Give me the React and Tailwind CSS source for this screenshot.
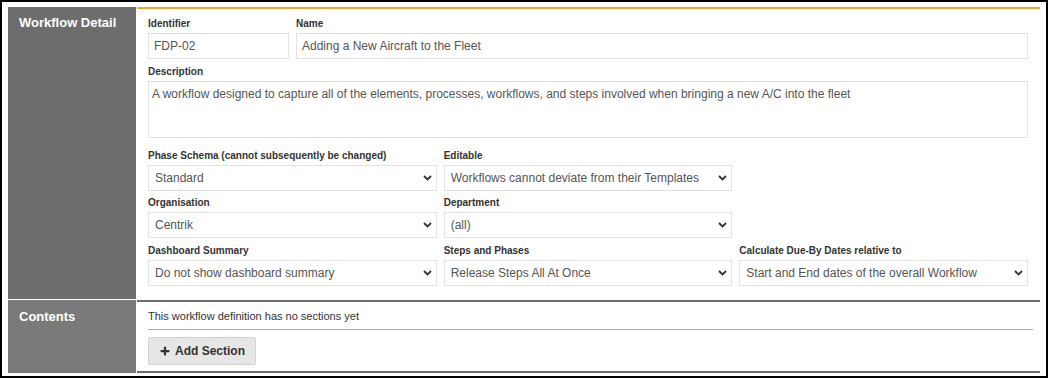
import { Plus } from 'lucide-react';

const font = { fontFamily: '"Liberation Sans", Arial, sans-serif' };

function Label({ children }) {
  return (
    <div className="h-[14px] leading-[14px] mb-[2px] text-[10px] font-bold text-[#333] whitespace-nowrap">
      {children}
    </div>
  );
}

function TextField({ value }) {
  return (
    <input
      readOnly
      value={value}
      className="w-full h-[26px] border border-[#e3e3e3] bg-white px-[5px] text-[12px] text-[#555] outline-none"
    />
  );
}

function SelectField({ value }) {
  return (
    <div className="relative h-[26px]">
      <select
        value={value}
        onChange={() => {}}
        className="w-full h-[26px] appearance-none border border-[#e3e3e3] bg-white pl-[6px] pr-6 text-[12px] text-[#555] outline-none"
      >
        <option>{value}</option>
      </select>
      <svg
        className="absolute right-[5px] top-[10px] pointer-events-none"
        width="9"
        height="6"
        viewBox="0 0 9 6"
        fill="none"
      >
        <path d="M1 1l3.5 3.5L8 1" stroke="#333" strokeWidth="1.8" />
      </svg>
    </div>
  );
}

export default function App() {
  return (
    <div className="w-[1048px] h-[378px] overflow-hidden bg-white border-2 border-black pt-[5px] pl-[6px] pr-[6px]" style={font}>
      <div className="flex flex-col">

        {/* WORKFLOW DETAIL ROW */}
        <div className="flex">
          <div className="w-[128px] shrink-0 bg-[#6d6d6d] border-b border-white pl-[11px] pt-[6px] text-[13px] font-bold text-white">
            Workflow Detail
          </div>
          <div className="flex-1 ml-px border-t-2 border-[#f5a623] pl-[11px] pr-[12px] pt-[8px] pb-[14px]">
            <div className="flex gap-[7px]">
              <div className="w-[141px]">
                <Label>Identifier</Label>
                <TextField value="FDP-02" />
              </div>
              <div className="flex-1">
                <Label>Name</Label>
                <TextField value="Adding a New Aircraft to the Fleet" />
              </div>
            </div>

            <div className="mt-[6px]">
              <Label>Description</Label>
              <textarea
                readOnly
                value="A workflow designed to capture all of the elements, processes, workflows, and steps involved when bringing a new A/C into the fleet"
                className="block w-full h-[57px] resize-none border border-[#e3e3e3] bg-white px-[3px] py-[5px] text-[12px] leading-[15px] text-[#555] outline-none"
              />
            </div>

            <div className="grid grid-cols-3 gap-x-[7px] mt-[11px]">
              <div>
                <Label>Phase Schema (cannot subsequently be changed)</Label>
                <SelectField value="Standard" />
              </div>
              <div>
                <Label>Editable</Label>
                <SelectField value="Workflows cannot deviate from their Templates" />
              </div>
            </div>

            <div className="grid grid-cols-3 gap-x-[7px] mt-[5px]">
              <div>
                <Label>Organisation</Label>
                <SelectField value="Centrik" />
              </div>
              <div>
                <Label>Department</Label>
                <SelectField value="(all)" />
              </div>
            </div>

            <div className="grid grid-cols-3 gap-x-[7px] mt-[6px]">
              <div>
                <Label>Dashboard Summary</Label>
                <SelectField value="Do not show dashboard summary" />
              </div>
              <div>
                <Label>Steps and Phases</Label>
                <SelectField value="Release Steps All At Once" />
              </div>
              <div>
                <Label>Calculate Due-By Dates relative to</Label>
                <SelectField value="Start and End dates of the overall Workflow" />
              </div>
            </div>
          </div>
        </div>

        {/* CONTENTS ROW */}
        <div className="flex">
          <div className="w-[128px] shrink-0 bg-[#7a7a7a] pl-[11px] pt-[7px] text-[13px] font-bold text-white">
            Contents
          </div>
          <div className="flex-1 ml-px border-t-2 border-b-2 border-[#6d6d6d] pl-[11px] pr-[7px] pt-[7px] pb-[6px]">
            <p className="h-[14px] leading-[14px] text-[11px] text-[#333]">This workflow definition has no sections yet</p>
            <div className="mt-[6px] h-px bg-[#a8a8a8]" />
            <button className="mt-[7px] h-[28px] w-[108px] flex items-center justify-center gap-[4px] rounded-[2px] border border-[#d2d2d2] bg-[#e6e6e6] text-[12px] font-bold text-[#333]">
              <Plus size={12} strokeWidth={4.5} />
              Add Section
            </button>
          </div>
        </div>
      </div>
    </div>
  );
}
